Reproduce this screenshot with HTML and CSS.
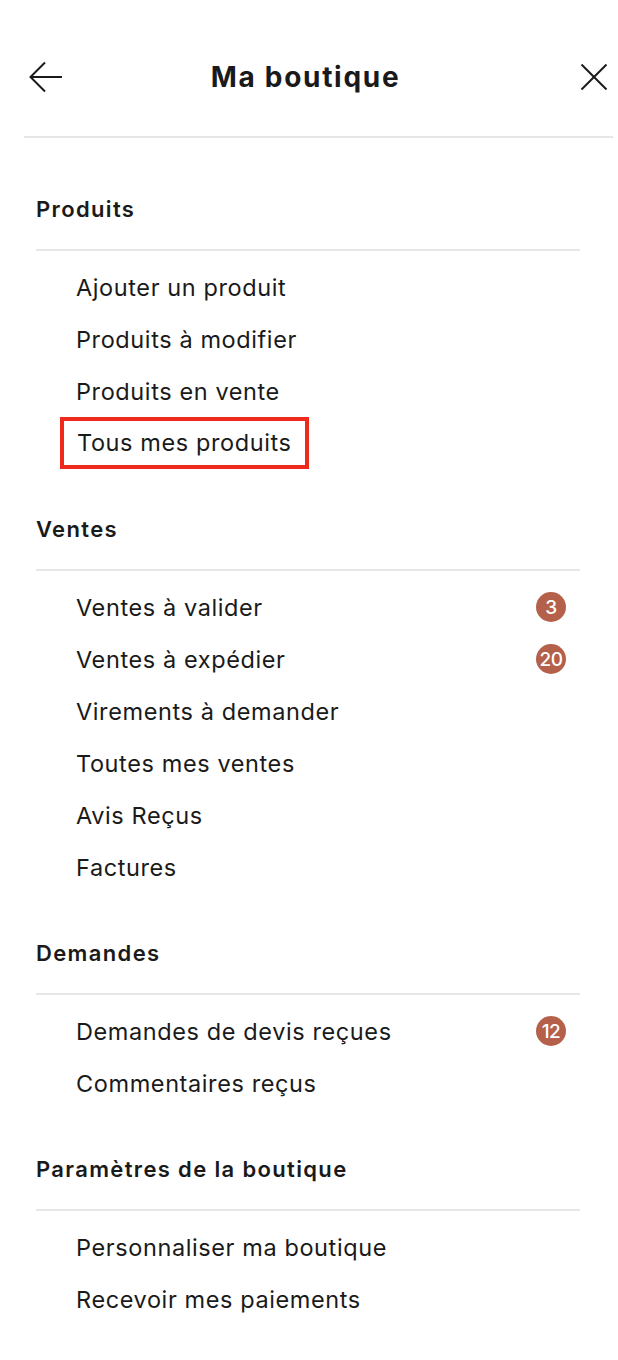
FILE: index.html
```html
<!DOCTYPE html>
<html lang="fr">
<head>
    <meta charset="UTF-8">
    <meta name="viewport" content="width=device-width, initial-scale=1.0">
    <title>Ma boutique</title>
    <link rel="stylesheet" href="styles.css">
</head>
<body>
    <div class="panel">
        <!-- En-tête -->
        <div class="header">
            <button class="icon-btn" aria-label="Retour">
                <svg width="34" height="32" viewBox="0 0 34 32" fill="none" stroke="#1a1a1a" stroke-width="2">
                    <path d="M33 16H2"/>
                    <path d="M16 1.5L1.5 16L16 30.5"/>
                </svg>
            </button>
            <h1>Ma boutique</h1>
            <button class="icon-btn" aria-label="Fermer">
                <svg width="28" height="28" viewBox="0 0 28 28" fill="none" stroke="#1a1a1a" stroke-width="2">
                    <path d="M1.5 1.5L26.5 26.5"/>
                    <path d="M26.5 1.5L1.5 26.5"/>
                </svg>
            </button>
        </div>

        <!-- Produits -->
        <div class="section">
            <div class="section-title">Produits</div>
            <ul class="menu">
                <li><span>Ajouter un produit</span></li>
                <li><span>Produits à modifier</span></li>
                <li><span>Produits en vente</span></li>
                <li class="highlight"><span>Tous mes produits</span></li>
            </ul>
        </div>

        <!-- Ventes -->
        <div class="section">
            <div class="section-title">Ventes</div>
            <ul class="menu">
                <li><span>Ventes à valider</span><span class="badge">3</span></li>
                <li><span>Ventes à expédier</span><span class="badge">20</span></li>
                <li><span>Virements à demander</span></li>
                <li><span>Toutes mes ventes</span></li>
                <li><span>Avis Reçus</span></li>
                <li><span>Factures</span></li>
            </ul>
        </div>

        <!-- Demandes -->
        <div class="section">
            <div class="section-title">Demandes</div>
            <ul class="menu">
                <li><span>Demandes de devis reçues</span><span class="badge">12</span></li>
                <li><span>Commentaires reçus</span></li>
            </ul>
        </div>

        <!-- Paramètres -->
        <div class="section">
            <div class="section-title">Paramètres de la boutique</div>
            <ul class="menu">
                <li><span>Personnaliser ma boutique</span></li>
                <li><span>Recevoir mes paiements</span></li>
            </ul>
        </div>
    </div>
</body>
</html>
```

FILE: styles.css
```css
body {
    margin: 0;
    background-color: #fff;
    color: #1a1a1a;
    font-family: 'Inter', 'Noto Sans', sans-serif;
}

.panel {
    width: 618px;
    padding-top: 46px;
}

.header {
    display: flex;
    align-items: center;
    justify-content: space-between;
    margin: 0 5px 0 24px;
    height: 62px;
    padding-bottom: 28px;
    border-bottom: 2px solid #e6e6e6;
}

.header h1 {
    margin: 0 32px 0 0;
    font-size: 28px;
    font-weight: 700;
    letter-spacing: 1.7px;
}

.icon-btn {
    background: none;
    border: none;
    padding: 0;
    display: flex;
    cursor: pointer;
}

.icon-btn:first-child {
    margin-left: 5px;
}

.icon-btn:last-child {
    margin-right: 5px;
}

.section {
    margin: 0 38px 0 36px;
    padding-top: 45px;
}

.header + .section {
    padding-top: 56px;
}

.section-title {
    font-size: 22px;
    font-weight: 600;
    letter-spacing: 1.35px;
    line-height: 30px;
    padding-bottom: 25px;
    border-bottom: 2px solid #e6e6e6;
}

.menu {
    list-style: none;
    margin: 0;
    padding: 10px 0 0;
}

.menu li {
    display: flex;
    align-items: center;
    justify-content: space-between;
    height: 52px;
    padding: 0 14px 0 40px;
    font-size: 23.5px;
    letter-spacing: 0.6px;
}

.menu li.highlight span {
    margin-left: -16px;
    padding: 0 13px;
    height: 44px;
    line-height: 44px;
    border: 4px solid #ee2a1f;
}

.badge {
    display: flex;
    align-items: center;
    justify-content: center;
    width: 30px;
    height: 30px;
    border-radius: 50%;
    background-color: #b5604a;
    color: #fff;
    font-size: 19px;
    font-weight: 500;
    letter-spacing: -0.5px;
}
```
